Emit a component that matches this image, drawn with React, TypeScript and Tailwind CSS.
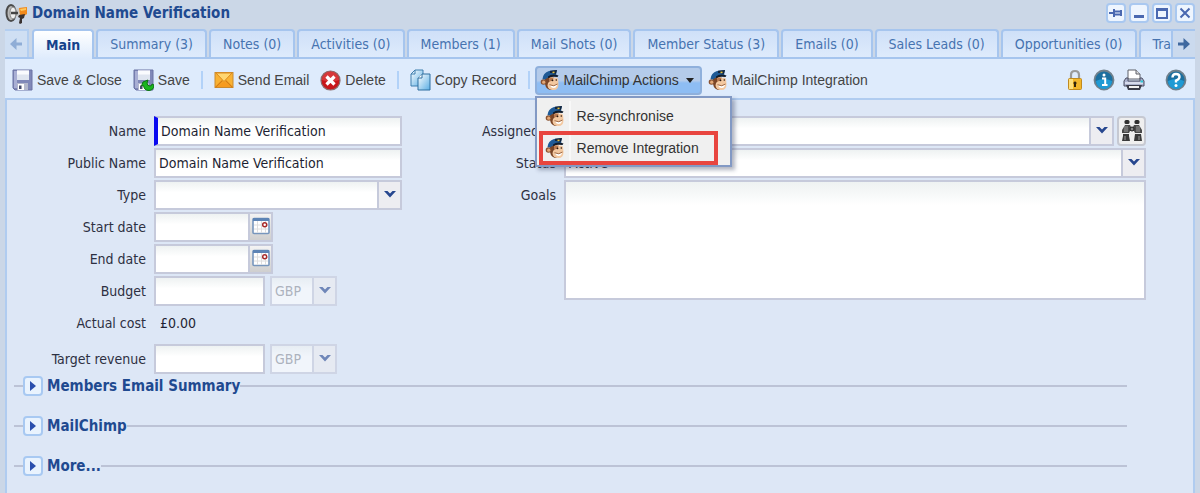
import React from "react";
import clsx from "clsx";

type IconProps = { className?: string };

const tabs = [
  "Main",
  "Summary (3)",
  "Notes (0)",
  "Activities (0)",
  "Members (1)",
  "Mail Shots (0)",
  "Member Status (3)",
  "Emails (0)",
  "Sales Leads (0)",
  "Opportunities (0)",
  "Training (0)",
];

const sections = ["Members Email Summary", "MailChimp", "More..."];

const fieldBox = "h-[30px] border-2 border-[#c6cadb] bg-gradient-to-b from-[#eef2f2] to-white to-40%";
const labelText = "shrink-0 whitespace-nowrap text-right text-sm text-[#2d3042]";

function CampaignIcon() {
  return (
    <svg className="h-6 w-6" viewBox="0 0 24 24" aria-hidden>
      <path d="M10 8l9-2 3 2v5l-5 3-6-1z" fill="#c9c9c9" />
      <path d="M14 7l8-1v7l-5 3-2-2z" fill="#f28a1c" />
      <path d="M15 8l6-1v2l-5 1z" fill="#ffc65a" />
      <ellipse cx="6" cy="12" rx="4.500" ry="8" fill="#b9b9b9" stroke="#4a4a4a" strokeWidth="2" />
      <ellipse cx="8" cy="12" rx="3" ry="6" fill="#efefef" stroke="#8a8a8a" strokeWidth="1" />
      <path d="M6 12h7" stroke="#444" strokeWidth="2.500" />
      <path d="M14 14l6-1-1 4-2 1v4l-2 1-1-1 1-5-2-1z" fill="#3a3230" />
    </svg>
  );
}

function FloppyIcon({ saved = false }: { saved?: boolean }) {
  return (
    <svg className="h-[22px] w-[21px] shrink-0" viewBox="0 0 21 22" aria-hidden>
      <path d="M1 1h19v20H3l-2-2z" fill="#8088b8" stroke="#6a72a4" />
      <path d="M2 2h3v17H2z" fill="#a9afd4" />
      <path d="M5 1.500h12V11H5z" fill="#dfe5f0" />
      <path d="M5 1.500h12v4H5z" fill="#fafbfe" />
      <path d="M5 14h11v7H5z" fill="#b4b8cc" />
      <path d="M6 15h6v6H6z" fill="#fff" />
      <path d="M7 16.500h2.500V20H7z" fill="#474d6e" />
      {saved && (
        <path
          d="M10 13l5-2-1 3q0 3 3 3 2 0 2-2l2 1q0 5-5 5.500-5 0-5.500-5l-2 .5z"
          fill="#19b51f"
          stroke="#0b7412"
          strokeWidth="1"
        />
      )}
    </svg>
  );
}

function EnvelopeIcon() {
  return (
    <svg className="h-[18px] w-5 shrink-0" viewBox="0 0 20 18" aria-hidden>
      <rect x="1" y="1.500" width="18" height="15" fill="#f9b233" stroke="#c98a2f" />
      <path d="M1.500 16.500l7-7M18.500 16.500l-7-7" stroke="#d97e12" strokeWidth="1.300" />
      <path d="M3 16l7-6 7 6z" fill="#f79b1e" />
      <path d="M2 2h16l-8 8.500z" fill="#ffd670" stroke="#dd8a1c" />
    </svg>
  );
}

function DeleteIcon() {
  return (
    <svg className="h-[21px] w-[21px] shrink-0" viewBox="0 0 21 21" aria-hidden>
      <circle cx="10.500" cy="10.500" r="9.500" fill="#c8161a" stroke="#8c6a6a" strokeWidth="1.200" />
      <path d="M2 10a8.500 8.500 0 0 1 17 0q-8 3-17 0z" fill="#e05050" opacity=".6" />
      <path d="M6.500 6.500l8 8M14.500 6.500l-8 8" stroke="#fff" strokeWidth="3.200" />
    </svg>
  );
}

function CopyIcon() {
  return (
    <svg className="h-[22px] w-[21px] shrink-0" viewBox="0 0 21 22" aria-hidden>
      <defs>
        <linearGradient id="sheet" x1="0" y1="0" x2="1" y2="1">
          <stop offset="0" stopColor="#fff" />
          <stop offset="1" stopColor="#5aaee4" />
        </linearGradient>
      </defs>
      <path d="M5 1h8v16H1V5z" fill="url(#sheet)" stroke="#3f7fae" />
      <path d="M5 1v4H1" fill="none" stroke="#3f7fae" />
      <path d="M12 5h8v16H8V9z" fill="url(#sheet)" stroke="#2f6f9f" />
      <path d="M12 5v4H8" fill="#fff" stroke="#2f6f9f" />
    </svg>
  );
}

function ChimpIcon() {
  return (
    <svg className="h-[22px] w-5 shrink-0" viewBox="0 0 20 22" aria-hidden>
      <path d="M5 8l5-2 4 3-4 3-1 4 3 5q-6 0-7-6z" fill="#7a4526" />
      <circle cx="3.500" cy="13" r="2.800" fill="#8a5230" />
      <circle cx="3.700" cy="13.200" r="1.600" fill="#e3a877" />
      <path d="M9 9.500q3-2.500 5-.5 3-1.500 4 1l.5 5q0 6-5 6-5.500 0-6-4.500 0-3 2-4z" fill="#f3c8a0" />
      <path d="M9 9.500q3-2 4.500 0l-1 2.500q-2-.5-3.500 1z" fill="#b97a50" />
      <path d="M2.500 10Q3 4 9 2l8-1-1 4 1 2Q11 5.500 5 10.500z" fill="#1f5a96" />
      <path d="M10 1.800L17 1l-1 4q-4-1.500-6-1z" fill="#14253c" />
      <path d="M8 7.500q4-3.500 10.500-1L17.500 8Q12 7 8 9z" fill="#111c2b" />
      <path d="M12.500 3.500l2-.3" stroke="#e8c43c" strokeWidth="1.400" />
      <circle cx="12.500" cy="11.300" r=".9" fill="#2b190f" />
      <circle cx="16.300" cy="11" r=".8" fill="#2b190f" />
      <path d="M10 16q4 2 7-.5-.5 3.500-3.300 3.500T10 16z" fill="#fff" />
      <path d="M9.500 15.700q4.500 2.500 8-.7" fill="none" stroke="#8a5230" strokeWidth=".8" />
    </svg>
  );
}

function LockIcon() {
  return (
    <svg className="h-[22px] w-4" viewBox="0 0 16 22" aria-hidden>
      <path d="M4 11V6q0-4 4-4t4 4v5" fill="none" stroke="#9a9a9a" strokeWidth="2.200" />
      <rect x="1.500" y="9.500" width="13" height="11" rx="1" fill="#f3b62a" stroke="#c08a20" />
      <path d="M2 10h4v10H2z" fill="#ffdf7a" />
      <path d="M8 12.500a1.600 1.600 0 0 1 1 2.800V18H7v-2.700a1.600 1.600 0 0 1 1-2.800z" fill="#33240a" />
    </svg>
  );
}

function RoundIcon({ children }: { children: React.ReactNode }) {
  return (
    <svg className="h-[22px] w-[22px]" viewBox="0 0 22 22" aria-hidden>
      <circle cx="11" cy="11" r="9.500" fill="#1c6f9f" stroke="#70808c" strokeWidth="1.800" />
      <path d="M3 12a8 8 0 0 0 16 0q-8-4-16 0z" fill="#1f9ad4" />
      {children}
    </svg>
  );
}

function PrinterIcon() {
  return (
    <svg className="h-[22px] w-[22px]" viewBox="0 0 22 22" aria-hidden>
      <path d="M5 10V1h8l4 4v5z" fill="#fff" stroke="#5e6068" />
      <path d="M13 1v4h4" fill="#ddd" stroke="#5e6068" />
      <path d="M3 9h2v3h12V9h2l2 3v5H1v-5z" fill="#aab1cc" stroke="#4c4f63" />
      <path d="M2 13h18v2H2z" fill="#d8dcec" />
      <path d="M3 16h16l-2 5H5z" fill="#3b3d49" />
      <path d="M6 17h10v2H6z" fill="#f3f3f3" />
      <path d="M17.500 12.500h2.500" stroke="#2ec4d6" strokeWidth="2" />
    </svg>
  );
}

function CalendarIcon() {
  return (
    <svg className="h-[18px] w-[18px]" viewBox="0 0 18 18" aria-hidden>
      <rect x="1" y="1.500" width="16" height="15" rx="1" fill="#fff" stroke="#7796bd" strokeWidth="1.600" />
      <path d="M1 1h16v3H1z" fill="#5d84b5" />
      <path d="M5.500 4v12M9.500 4v12M13.500 4v12M2 8h14M2 12h14" stroke="#dedede" />
      <circle cx="12.700" cy="7.700" r="2" fill="#fff" stroke="#a82a2a" strokeWidth="1.500" />
    </svg>
  );
}

function BinocularsIcon() {
  return (
    <svg className="h-[22px] w-[22px]" viewBox="0 0 22 22" aria-hidden>
      <rect x="3.500" y="0" width="5" height="4" rx="1.500" fill="#303030" />
      <rect x="13.500" y="0" width="5" height="4" rx="1.500" fill="#303030" />
      <path d="M4 5h5l1 2h2l1-2h5l3 5v3h-7l-1-2H9l-1 2H1v-3z" fill="#4a4a4a" />
      <path d="M2 14h6v2l1 5H1l1-5zM14 14h6l1 7h-8z" fill="#3a3a3a" />
      <path d="M4 6v6M6 6v6M16 6v6M18 6v6M4 16v4M18 16v4" stroke="#9b9b9b" />
      <circle cx="11" cy="9" r="2" fill="#888" stroke="#222" />
    </svg>
  );
}

function Chevron({ className }: IconProps) {
  return (
    <svg className={clsx("h-2 w-3", className)} viewBox="0 0 12 8" aria-hidden>
      <path d="M0 1h3.500L6 3.500 8.500 1H12L6 7.500z" fill="currentColor" />
    </svg>
  );
}

function ScrollArrow({ className }: IconProps) {
  return (
    <svg className={clsx("h-3 w-3", className)} viewBox="0 0 12 12" aria-hidden>
      <path d="M0 4.500h5.500V0L12 6l-6.500 6V7.500H0z" fill="currentColor" />
    </svg>
  );
}

function WindowButton({ label, children }: { label: string; children: React.ReactNode }) {
  return (
    <button
      aria-label={label}
      className="flex h-5 w-5 items-center justify-center rounded border-2 border-[#a9c8f0] bg-[#eef5fe] text-[#4a68b0]"
    >
      <svg className="h-4 w-4 shrink-0" viewBox="0 0 16 16" fill="none" stroke="currentColor" strokeWidth="2" aria-hidden>
        {children}
      </svg>
    </button>
  );
}

function Row({ label, id, right = false, children }: { label: string; id: string; right?: boolean; children: React.ReactNode }) {
  return (
    <div className="flex items-start gap-2">
      <label htmlFor={id} className={clsx(labelText, "leading-[30px]", right ? "w-20" : "w-[132px]")}>
        {label}
      </label>
      {children}
    </div>
  );
}

function Combo({ id, value = "", disabled = false, className }: { id: string; value?: string; disabled?: boolean; className: string }) {
  return (
    <div className={clsx("flex", fieldBox, className, disabled && "opacity-60")}>
      <select
        id={id}
        disabled={disabled}
        aria-label={disabled ? "Currency" : undefined}
        className={clsx(
          "min-w-0 flex-1 appearance-none bg-transparent px-[3px] text-sm outline-none",
          disabled ? "text-[#8c8f98]" : "text-[#1d1f33]"
        )}
      >
        <option>{value}</option>
      </select>
      <span className="pointer-events-none flex w-[23px] justify-center border-l-2 border-[#c6cadb] bg-[#ededf1] pt-2 text-[#27478f]">
        <Chevron />
      </span>
    </div>
  );
}

function DateField({ id }: { id: string }) {
  return (
    <div className={clsx("flex w-[119px]", fieldBox)}>
      <input id={id} className="min-w-0 flex-1 bg-transparent px-[3px] text-sm outline-none" />
      <button
        type="button"
        aria-label="Pick a date"
        className="flex w-[23px] justify-center border-l-2 border-[#c6cadb] bg-gradient-to-b from-[#f3f3f3] to-[#cfcfcf] pt-[3px]"
      >
        <CalendarIcon />
      </button>
    </div>
  );
}

function MoneyField({ id }: { id: string }) {
  return (
    <div className="flex gap-[5px]">
      <input id={id} className={clsx("w-[111px] px-[3px] text-sm outline-none", fieldBox)} />
      <Combo id={`${id}-currency`} value="GBP" disabled className="w-[67px]" />
    </div>
  );
}

function ToolButton({ icon, children }: { icon: React.ReactNode; children: React.ReactNode }) {
  return (
    <button className="flex h-7 items-center gap-1 whitespace-nowrap">
      {icon}
      <span>{children}</span>
    </button>
  );
}

function Separator() {
  return <span className="h-[18px] w-0.5 shrink-0 bg-[#b2d2f8]" />;
}

function TabStrip() {
  return (
    <nav className="flex h-[30px] border-b-2 border-[#a6c5ee]">
      <button
        aria-label="Scroll tabs left"
        className="mr-[3px] flex w-6 shrink-0 items-center justify-center border-r-2 border-t-2 border-[#b3cef0] bg-[#cfdff3] text-[#8fadd6]"
      >
        <ScrollArrow className="rotate-180" />
      </button>
      <div role="tablist" className="flex min-w-0 flex-1 gap-0.5 overflow-x-clip">
        {tabs.map((tab, i) => (
          <button
            key={tab}
            role="tab"
            aria-selected={i === 0}
            className={clsx(
              "shrink-0 whitespace-nowrap rounded-t border-2 border-b-0 border-[#a6c5ee] px-3 text-sm",
              i === 0
                ? "-mb-0.5 bg-gradient-to-b from-white to-[#deebfc] font-bold text-[#15428b]"
                : "bg-gradient-to-b from-[#cfe0f8] to-[#deebfc] text-[#4673b0]"
            )}
          >
            {tab}
          </button>
        ))}
      </div>
      <button
        aria-label="Scroll tabs right"
        className="flex w-6 shrink-0 items-center justify-center border-l-2 border-t-2 border-[#a6c5ee] bg-[#cbdaee] text-[#40699f]"
      >
        <ScrollArrow />
      </button>
    </nav>
  );
}

function MenuIcon() {
  return (
    <span className="flex h-full items-center border-r-2 border-[#f8f8f8] pr-1">
      <ChimpIcon />
    </span>
  );
}

function ActionsMenu() {
  return (
    <div
      role="menu"
      className="absolute left-0 top-[30px] z-10 w-[197px] border-2 border-[#8299c4] bg-[#f0f0f0] px-0.5 pt-[3px] shadow-[3px_3px_4px_rgba(60,70,100,0.4)]"
    >
      <button role="menuitem" className="flex h-[30px] w-full items-center gap-1.5 px-1.5 text-[#333]">
        <MenuIcon />
        Re-synchronise
      </button>
      <button
        role="menuitem"
        className="flex h-[34px] w-[179px] items-center gap-1.5 border-4 border-[#e8453f] px-0.5 text-[#333]"
      >
        <MenuIcon />
        Remove Integration
      </button>
    </div>
  );
}

function Toolbar() {
  return (
    <div className="flex h-[39px] items-center gap-[11px] pb-px pl-[7px] pr-2 pt-1 font-['Liberation_Sans',sans-serif] text-sm text-[#444]">
      <ToolButton icon={<FloppyIcon />}>Save &amp; Close</ToolButton>
      <ToolButton icon={<FloppyIcon saved />}>Save</ToolButton>
      <Separator />
      <ToolButton icon={<EnvelopeIcon />}>Send Email</ToolButton>
      <ToolButton icon={<DeleteIcon />}>Delete</ToolButton>
      <Separator />
      <ToolButton icon={<CopyIcon />}>Copy Record</ToolButton>
      <Separator />
      <div className="-ml-1.5 flex items-center gap-1.5">
        <div className="relative">
          <button
            aria-haspopup="menu"
            aria-expanded
            className="flex h-[29px] items-center gap-1 whitespace-nowrap rounded-sm border-2 border-[#8fb0dc] bg-gradient-to-b from-[#b4cbea] from-50% to-[#8ebdf3] to-60% px-[3px] text-[#333]"
          >
            <ChimpIcon />
            MailChimp Actions
            <svg className="mx-[3px] h-[5px] w-2" viewBox="0 0 8 5" aria-hidden>
              <path d="M0 0h8L4 5z" fill="#222" />
            </svg>
          </button>
          <ActionsMenu />
        </div>
        <ToolButton icon={<ChimpIcon />}>MailChimp Integration</ToolButton>
      </div>
      <div className="ml-auto flex items-center gap-2">
        <button aria-label="Permissions" className="mr-0.5">
          <LockIcon />
        </button>
        <button aria-label="Information">
          <RoundIcon>
            <path d="M9 9.500h3.200V16M9 16h5.500" stroke="#fff" strokeWidth="2" fill="none" />
            <circle cx="11" cy="6" r="1.500" fill="#fff" />
          </RoundIcon>
        </button>
        <button aria-label="Print">
          <PrinterIcon />
        </button>
        <button aria-label="Help" className="ml-3">
          <RoundIcon>
            <path d="M7.500 8.500q0-3.500 3.500-3.500t3.500 3q0 2-3.500 3.500v2" stroke="#fff" strokeWidth="2.400" fill="none" />
            <circle cx="11" cy="16.500" r="1.500" fill="#fff" />
          </RoundIcon>
        </button>
      </div>
    </div>
  );
}

function Section({ title }: { title: string }) {
  return (
    <div className="flex h-5 items-center">
      <span className="h-0.5 w-[9px] bg-[#bcc3d6]" />
      <button
        type="button"
        aria-label={`Expand ${title}`}
        className="flex h-5 w-5 shrink-0 items-center justify-center rounded border-2 border-[#a8c9f2] bg-[#e9f3fe]"
      >
        <svg className="h-2.5 w-1.5" viewBox="0 0 6 10" aria-hidden>
          <path d="M0 0l6 5-6 5z" fill="#2a4fae" />
        </svg>
      </button>
      <h2 className="pl-1 text-[15px] font-bold text-[#1f4a90]">{title}</h2>
      <span className="h-0.5 flex-1 bg-[#bcc3d6]" />
    </div>
  );
}

export default function App() {
  return (
    <main className="min-h-screen bg-[#cbd7e7] px-[5px] font-['DejaVu_Sans_Condensed','DejaVu_Sans',sans-serif] font-stretch-condensed">
      <header className="flex h-[29px] items-center justify-between pb-[3px]">
        <h1 className="flex items-center gap-[3px] text-[15px] font-bold text-[#1f4a90]">
          <CampaignIcon />
          Domain Name Verification
        </h1>
        <div className="flex gap-[3px]">
          <WindowButton label="Pin">
            <path d="M1 8h5" />
            <path d="M6 4v8M7 6.500h6v3H7M13 5v6" />
          </WindowButton>
          <WindowButton label="Minimise">
            <path d="M3 11.500h10" strokeWidth="3" />
          </WindowButton>
          <WindowButton label="Maximise">
            <path d="M3 4h10v9H3zM3 5h10" />
          </WindowButton>
          <WindowButton label="Close">
            <path d="M3.500 3.500l9 9M12.500 3.500l-9 9" />
          </WindowButton>
        </div>
      </header>

      <div className="bg-[#deebfc]">
        <div className="bg-[#cbd7e7]">
          <TabStrip />
        </div>
        <Toolbar />
      </div>

      <form
        onSubmit={(e) => e.preventDefault()}
        className="border-2 border-b-0 border-[#b0ccf0] bg-[#dde7f6] pb-[17px] pl-[7px] pr-[47px] pt-4"
      >
        <div className="flex">
          <div className="flex shrink-0 flex-col gap-0.5">
            <Row label="Name" id="name">
              <div className={clsx("flex w-[248px]", fieldBox, "border-l-4 border-l-[#0a0af0]")}>
                <input
                  id="name"
                  defaultValue="Domain Name Verification"
                  className="min-w-0 flex-1 bg-transparent px-[3px] text-sm text-[#1d1f33] outline-none"
                />
              </div>
            </Row>
            <Row label="Public Name" id="public-name">
              <input
                id="public-name"
                defaultValue="Domain Name Verification"
                className={clsx("w-[248px] px-[3px] text-sm text-[#1d1f33] outline-none", fieldBox)}
              />
            </Row>
            <Row label="Type" id="type">
              <Combo id="type" className="w-[248px]" />
            </Row>
            <Row label="Start date" id="start-date">
              <DateField id="start-date" />
            </Row>
            <Row label="End date" id="end-date">
              <DateField id="end-date" />
            </Row>
            <Row label="Budget" id="budget">
              <MoneyField id="budget" />
            </Row>
            <Row label="Actual cost" id="actual-cost">
              <output id="actual-cost" className="px-1.5 pb-1 text-sm leading-[30px] text-[#1d1f33]">
                £0.00
              </output>
            </Row>
            <Row label="Target revenue" id="target-revenue">
              <MoneyField id="target-revenue" />
            </Row>
          </div>

          <div className="ml-[74px] flex min-w-0 flex-1 flex-col gap-0.5">
            <Row label="Assigned To" id="assigned-to" right>
              <Combo id="assigned-to" className="flex-1" />
              <button
                type="button"
                aria-label="Find user"
                className="-ml-[5px] flex h-[30px] w-[29px] items-center justify-center rounded border-2 border-[#c6c9d2] bg-[#efefef]"
              >
                <BinocularsIcon />
              </button>
            </Row>
            <Row label="Status" id="status" right>
              <Combo id="status" value="Active" className="flex-1" />
            </Row>
            <Row label="Goals" id="goals" right>
              <textarea
                id="goals"
                className="h-[120px] flex-1 resize-none border-2 border-[#c6cadb] bg-gradient-to-b from-[#eef2f2] to-white to-20% p-[3px] text-sm outline-none"
              />
            </Row>
          </div>
        </div>

        <div className="mr-[19px] mt-0.5 flex flex-col gap-5">
          {sections.map((title) => (
            <Section key={title} title={title} />
          ))}
        </div>
      </form>
    </main>
  );
}
